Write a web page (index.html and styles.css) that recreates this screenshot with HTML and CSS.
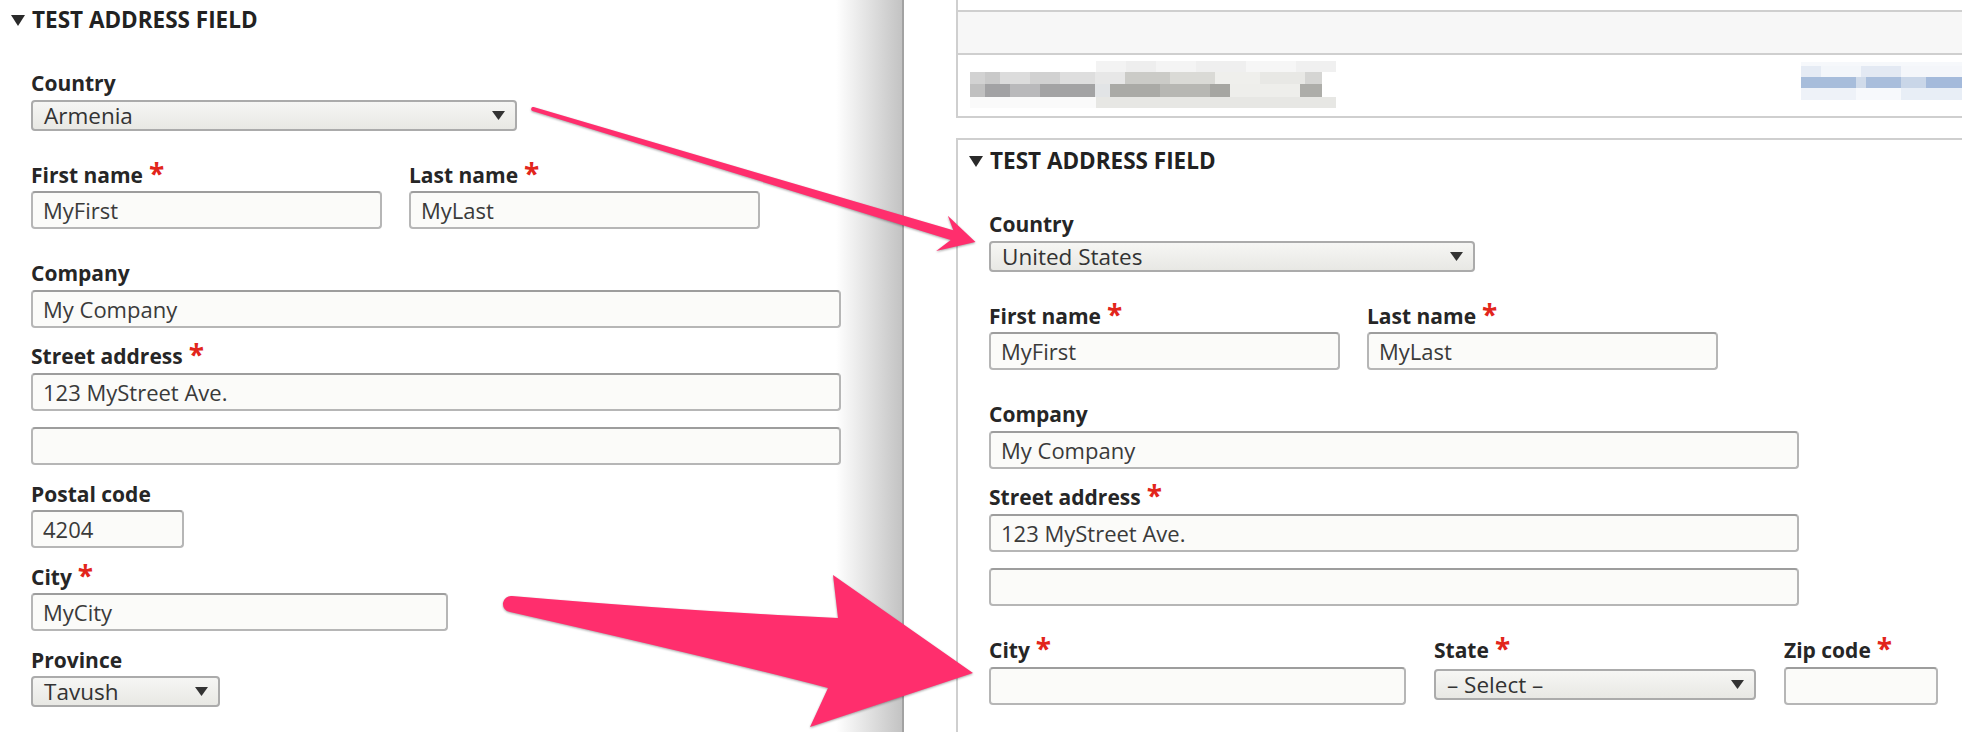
FILE: index.html
```html
<!DOCTYPE html>
<html lang="en">
<head>
<meta charset="utf-8">
<title>Address field</title>
<link rel="stylesheet" href="styles.css">
</head>
<body>
<div class="screen">
  <section class="pane pane-left">
    <div class="fieldset fieldset-flat">
      <div class="legend">
        <svg class="legend-tri" width="14" height="11" viewBox="0 0 14 11"><polygon points="0,0 14,0 7,11" fill="#2a2a2a"/></svg>
        <span>Test address field</span>
      </div>
      <div class="fields">
        <div class="field">
          <label>Country</label>
          <div class="select w-country"><span>Armenia</span><svg width="13" height="9" viewBox="0 0 13 9"><polygon points="0,0 13,0 6.5,9" fill="#333"/></svg></div>
        </div>
        <div class="row row-spaced">
          <div class="field">
            <label>First name<span class="req">*</span></label>
            <input class="text w-name" value="MyFirst">
          </div>
          <div class="field">
            <label>Last name<span class="req">*</span></label>
            <input class="text w-name" value="MyLast">
          </div>
        </div>
        <div class="field">
          <label>Company</label>
          <input class="text w-wide" value="My Company">
        </div>
        <div class="field">
          <label>Street address<span class="req">*</span></label>
          <div class="stack">
            <input class="text w-wide" value="123 MyStreet Ave.">
            <input class="text w-wide" value="">
          </div>
        </div>
        <div class="field">
          <label>Postal code</label>
          <input class="text w-postal" value="4204">
        </div>
        <div class="field">
          <label>City<span class="req">*</span></label>
          <input class="text w-city" value="MyCity">
        </div>
        <div class="field">
          <label>Province</label>
          <div class="select w-province"><span>Tavush</span><svg width="13" height="9" viewBox="0 0 13 9"><polygon points="0,0 13,0 6.5,9" fill="#333"/></svg></div>
        </div>
      </div>
    </div>
  </section>

  <section class="pane pane-right">
    <div class="table-box">
      <div class="trow trow-top"></div>
      <div class="trow trow-head"></div>
      <div class="trow trow-body">
        <div class="blur-text">
          <div class="bt bt-a"></div>
          <div class="bt bt-b"></div>
          <div class="bt bt-c"></div>
          <div class="bt bt-d"></div>
        </div>
        <div class="blur-link">
          <div class="bl bl-a"></div>
          <div class="bl bl-b"></div>
          <div class="bl bl-c"></div>
          <div class="bl bl-d"></div>
        </div>
      </div>
    </div>

    <div class="fieldset fieldset-boxed">
      <div class="legend">
        <svg class="legend-tri" width="14" height="11" viewBox="0 0 14 11"><polygon points="0,0 14,0 7,11" fill="#2a2a2a"/></svg>
        <span>Test address field</span>
      </div>
      <div class="fields">
        <div class="field">
          <label>Country</label>
          <div class="select w-country"><span>United States</span><svg width="13" height="9" viewBox="0 0 13 9"><polygon points="0,0 13,0 6.5,9" fill="#333"/></svg></div>
        </div>
        <div class="row row-spaced">
          <div class="field">
            <label>First name<span class="req">*</span></label>
            <input class="text w-name" value="MyFirst">
          </div>
          <div class="field">
            <label>Last name<span class="req">*</span></label>
            <input class="text w-name" value="MyLast">
          </div>
        </div>
        <div class="field">
          <label>Company</label>
          <input class="text w-wide" value="My Company">
        </div>
        <div class="field">
          <label>Street address<span class="req">*</span></label>
          <div class="stack">
            <input class="text w-wide" value="123 MyStreet Ave.">
            <input class="text w-wide" value="">
          </div>
        </div>
        <div class="row row-spaced-top">
          <div class="field">
            <label>City<span class="req">*</span></label>
            <input class="text w-city" value="">
          </div>
          <div class="field field-state">
            <label>State<span class="req">*</span></label>
            <div class="select w-state"><span>– Select –</span><svg width="13" height="9" viewBox="0 0 13 9"><polygon points="0,0 13,0 6.5,9" fill="#333"/></svg></div>
          </div>
          <div class="field">
            <label>Zip code<span class="req">*</span></label>
            <input class="text w-zip" value="">
          </div>
        </div>
      </div>
    </div>
  </section>

  <svg class="arrows" width="1962" height="732" viewBox="0 0 1962 732">
    <path d="M 533.6 107.1 L 953.3 230.3 L 947.8 215.7 L 975.5 242 L 936.2 251 L 950.7 239.9 L 532.4 110.9 A 2 2 0 0 1 533.6 107.1 Z" fill="#ff2e6d"/>
    <path d="M 512 596 Q 700 612 838 618 L 833 575 L 973 673 L 810 727 L 828 688 Q 700 655 510 612 A 8 8 0 0 1 512 596 Z" fill="#ff2e6d"/>
  </svg>
</div>
</body>
</html>
```

FILE: styles.css
```css
* {
  box-sizing: border-box;
}

body {
  margin: 0;
  width: 1962px;
  height: 732px;
  overflow: hidden;
  background: #fff;
  font-family: "Open Sans", "Noto Sans", "Liberation Sans", sans-serif;
  color: #262626;
}

.screen {
  position: relative;
  display: flex;
  height: 732px;
}

.pane-left {
  flex: none;
  width: 904px;
  padding-top: 5px;
  background: linear-gradient(90deg, #ffffff 0, #ffffff 836px, #c3c3c3 902px);
  border-right: 2px solid #a2a2a2;
}

.pane-right {
  flex: 1;
  padding-left: 52px;
  overflow: hidden;
}

/* top table-like box */
.table-box {
  border-left: 2px solid #cfcfcf;
  border-bottom: 2px solid #cfcfcf;
}

.trow-top {
  height: 10px;
}

.trow-head {
  height: 45px;
  background: #f7f7f7;
  border-top: 2px solid #cfcfcf;
  border-bottom: 2px solid #cfcfcf;
}

.trow-body {
  height: 61px;
  display: flex;
  align-items: flex-start;
  padding-left: 12px;
}

.blur-text {
  margin-top: 6px;
  width: 380px;
}

.bt-a {
  height: 11px;
  margin-left: 126px;
  width: 240px;
  background: linear-gradient(90deg, #f3f3f3 0 30px, #eeeeee 30px 60px, #f4f4f4 60px 100px, #efefef 100px 150px, #f6f6f6 150px 200px, #f0f0f0 200px 240px);
}

.bt-b {
  height: 12px;
  width: 352px;
  background: linear-gradient(90deg, #d2d2d2 0 15px, #c9c9c9 15px 30px, #dcdcdc 30px 60px, #d1d1d1 60px 90px, #dedede 90px 125px, #e7e7e7 125px 155px, #cbcbc7 155px 200px, #dadad6 200px 245px, #efefec 245px 290px, #e8e8e5 290px 335px, #d5d5d3 335px 352px);
}

.bt-c {
  height: 13px;
  width: 352px;
  background: linear-gradient(90deg, #c0c0c0 0 15px, #a2a2a4 15px 40px, #b9b9bb 40px 70px, #a3a3a4 70px 125px, #e2e4e6 125px 140px, #aaaaa6 140px 190px, #b7b7b3 190px 240px, #a6a6a2 240px 260px, #eeeeeb 260px 330px, #adada9 330px 352px);
}

.bt-d {
  height: 11px;
  width: 366px;
  background: linear-gradient(90deg, #fafafa 0 126px, #e7e7e4 126px 366px);
}

.blur-link {
  margin-top: 7px;
  margin-left: auto;
  width: 161px;
  flex: none;
}

.bl-a {
  height: 4px;
  background: #f6f8fb;
}

.bl-b {
  height: 11px;
  background: linear-gradient(90deg, #e5ebf4 0 20px, #f3f6fa 20px 60px, #e3e9f3 60px 100px, #f4f6fa 100px 161px);
}

.bl-c {
  height: 11px;
  background: linear-gradient(90deg, #a7bddb 0 55px, #d0dbea 55px 65px, #a9bedc 65px 100px, #c9d6e8 100px 125px, #a4badb 125px 161px);
}

.bl-d {
  height: 12px;
  background: linear-gradient(90deg, #eef2f8 0 55px, #f7f9fc 55px 100px, #e8eef6 100px 161px);
}

/* fieldsets */
.fieldset-boxed {
  margin-top: 20px;
  border-top: 2px solid #cfcfcf;
  border-left: 2px solid #cfcfcf;
  padding-top: 6px;
  height: 600px;
}

.legend {
  display: flex;
  align-items: center;
  gap: 7px;
  height: 30px;
  padding-left: 11px;
  font-size: 22.5px;
  line-height: 30px;
  font-weight: 700;
  text-transform: uppercase;
  color: #222;
}

.legend-tri {
  flex: none;
  margin-top: 1px;
}

.fields {
  display: flex;
  flex-direction: column;
  align-items: flex-start;
  gap: 15.5px;
  margin-top: 35px;
  padding-left: 31px;
}

.field {
  display: flex;
  flex-direction: column;
  align-items: flex-start;
}

.field label {
  display: block;
  font-size: 21px;
  line-height: 26px;
  font-weight: 700;
  color: #262626;
  margin-bottom: 3.5px;
  white-space: nowrap;
}

.req {
  color: #e2251b;
  font-size: 28px;
  line-height: 0;
  margin-left: 6px;
  vertical-align: -1px;
}

.row {
  display: flex;
  align-items: flex-start;
}

.row-spaced {
  gap: 27px;
  margin: 15.5px 0;
}

.row-spaced-top {
  gap: 28px;
  margin-top: 15.5px;
}

.field-state .select {
  margin-top: 2px;
}

.stack {
  display: flex;
  flex-direction: column;
  gap: 16.5px;
}

.text {
  display: block;
  height: 38px;
  margin: 0;
  padding: 0 10px;
  border: 2px solid #b6b6b6;
  border-top-color: #9d9d9d;
  border-radius: 4px;
  background: #fbfbf9;
  font-family: inherit;
  font-size: 22px;
  color: #3a3a3a;
  outline: none;
}

.select {
  display: flex;
  align-items: center;
  justify-content: space-between;
  height: 31px;
  padding: 0 10px 0 11px;
  border: 2px solid #ababab;
  border-radius: 4px;
  background: linear-gradient(#f6f6f4, #e8e8e4);
  font-size: 22.5px;
  line-height: 27px;
  color: #333;
}

.select svg {
  flex: none;
}

.w-country { width: 486px; }
.w-name { width: 351px; }
.w-wide { width: 810px; }
.w-postal { width: 153px; }
.w-city { width: 417px; }
.w-province { width: 189px; }
.w-state { width: 322px; }
.w-zip { width: 154px; }

.arrows {
  position: absolute;
  left: 0;
  top: 0;
  pointer-events: none;
  filter: drop-shadow(0 1px 1.2px rgba(0, 0, 0, 0.35));
}
```
